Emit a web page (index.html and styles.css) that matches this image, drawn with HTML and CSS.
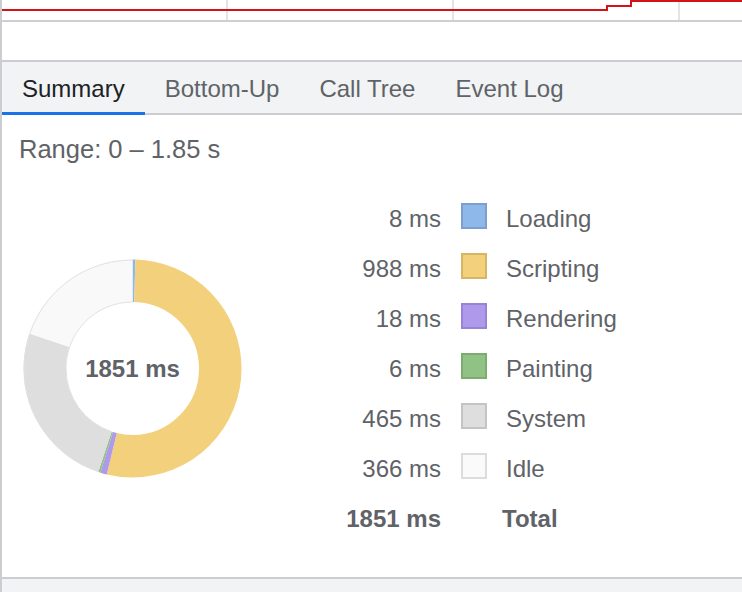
FILE: index.html
```html
<!DOCTYPE html>
<html lang="en">
<head>
<meta charset="utf-8">
<title>Performance Summary</title>
<link rel="stylesheet" href="styles.css">
</head>
<body>
<div class="panel">
  <div class="overview">
    <svg class="overview-svg" width="740" height="20" viewBox="0 0 740 20">
      <rect x="224" y="0" width="2" height="20" fill="#e4e4e4"/>
      <rect x="450" y="0" width="2" height="20" fill="#e4e4e4"/>
      <rect x="676" y="0" width="2" height="20" fill="#e4e4e4"/>
      <path d="M0 10 H605 V6 H629 V1 H740" fill="none" stroke="#d31414" stroke-width="2"/>
    </svg>
  </div>
  <div class="gap"></div>
  <div class="tabs">
    <div class="tab active">Summary</div>
    <div class="tab">Bottom-Up</div>
    <div class="tab">Call Tree</div>
    <div class="tab">Event Log</div>
  </div>
  <div class="summary">
    <div class="range">Range: 0 – 1.85 s</div>
    <div class="details">
      <div class="donut">
        <svg class="donut-svg" width="219" height="219" viewBox="0 0 219 219">
          <g transform="rotate(-90 109.5 109.5)" fill="none" stroke-width="42.5">
            <circle cx="109.5" cy="109.5" r="87.75" pathLength="1851" stroke="#8fb8ea" stroke-dasharray="8 1843" stroke-dashoffset="0"/>
            <circle cx="109.5" cy="109.5" r="87.75" pathLength="1851" stroke="#f2d07c" stroke-dasharray="988 863" stroke-dashoffset="-8"/>
            <circle cx="109.5" cy="109.5" r="87.75" pathLength="1851" stroke="#af99eb" stroke-dasharray="18 1833" stroke-dashoffset="-996"/>
            <circle cx="109.5" cy="109.5" r="87.75" pathLength="1851" stroke="#90c185" stroke-dasharray="6 1845" stroke-dashoffset="-1014"/>
            <circle cx="109.5" cy="109.5" r="87.75" pathLength="1851" stroke="#dedede" stroke-dasharray="465 1386" stroke-dashoffset="-1020"/>
            <circle cx="109.5" cy="109.5" r="87.75" pathLength="1851" stroke="#f9f9f9" stroke-dasharray="366 1485" stroke-dashoffset="-1485"/>
            <circle cx="109.5" cy="109.5" r="108.5" pathLength="1851" stroke="#e2e2e2" stroke-width="1" stroke-dasharray="831 1020" stroke-dashoffset="-1020"/>
            <circle cx="109.5" cy="109.5" r="66.5" pathLength="1851" stroke="#e2e2e2" stroke-width="1" stroke-dasharray="831 1020" stroke-dashoffset="-1020"/>
          </g>
        </svg>
        <div class="donut-total">1851 ms</div>
      </div>
      <div class="legend">
        <div class="value">8 ms</div><div class="swatch loading"></div><div class="label">Loading</div>
        <div class="value">988 ms</div><div class="swatch scripting"></div><div class="label">Scripting</div>
        <div class="value">18 ms</div><div class="swatch rendering"></div><div class="label">Rendering</div>
        <div class="value">6 ms</div><div class="swatch painting"></div><div class="label">Painting</div>
        <div class="value">465 ms</div><div class="swatch system"></div><div class="label">System</div>
        <div class="value">366 ms</div><div class="swatch idle"></div><div class="label">Idle</div>
        <div class="value total">1851 ms</div><div class="swatch-empty"></div><div class="label total total-label">Total</div>
      </div>
    </div>
  </div>
  <div class="footer"></div>
</div>
</body>
</html>
```

FILE: styles.css
```css
html, body {
  margin: 0;
  padding: 0;
  background: #ffffff;
}

body {
  font-family: "Liberation Sans", Arial, Helvetica, sans-serif;
  color: #5f6368;
}

.panel {
  height: 592px;
  border-left: 2px solid #cbcdd1;
  display: flex;
  flex-direction: column;
  box-sizing: border-box;
}

.overview {
  height: 20px;
  border-bottom: 2px solid #cdcfd3;
  overflow: hidden;
}

.overview-svg {
  display: block;
}

.gap {
  height: 38px;
}

.tabs {
  display: flex;
  height: 51px;
  background: #f1f3f4;
  border-top: 2px solid #cbcdd1;
  border-bottom: 2px solid #cbcdd1;
}

.tab {
  position: relative;
  padding: 2px 20px 0;
  font-size: 24px;
  line-height: 49px;
  color: #5f6368;
}

.tab.active {
  color: #202124;
}

.tab.active::after {
  content: "";
  position: absolute;
  left: 0;
  right: 0;
  bottom: -2px;
  height: 3px;
  background: #1a73e8;
}

.summary {
  flex: 1;
  padding: 19px 0 0 17px;
}

.range {
  font-size: 25.5px;
  line-height: 30px;
  color: #5f6368;
}

.details {
  display: flex;
  align-items: center;
  margin-top: 29px;
}

.donut {
  display: grid;
  place-items: center;
  margin-left: 4px;
  width: 219px;
  height: 219px;
}

.donut-svg,
.donut-total {
  grid-area: 1 / 1;
}

.donut-svg {
  display: block;
}

.donut-total {
  font-size: 24px;
  font-weight: bold;
  color: #5f6368;
  padding-top: 2px;
}

.legend {
  margin-left: 99px;
  display: grid;
  grid-template-columns: 100px 26px auto;
  grid-auto-rows: 50px;
  column-gap: 20px;
  align-items: center;
  font-size: 24px;
}

.value {
  text-align: right;
  padding-top: 2px;
}

.label {
  margin-left: -1px;
  padding-top: 2px;
}

.total {
  font-weight: bold;
}

.total-label {
  margin-left: -5px;
}

.swatch {
  width: 26px;
  height: 26px;
  box-sizing: border-box;
  border: 2px solid;
  margin-top: -4px;
}

.swatch.loading { background: #8fb8ea; border-color: #7c9fd0; }
.swatch.scripting { background: #f3d17c; border-color: #d6b665; }
.swatch.rendering { background: #af99eb; border-color: #9a83d6; }
.swatch.painting { background: #90c185; border-color: #7cac70; }
.swatch.system { background: #dedede; border-color: #c4c4c4; }
.swatch.idle { background: #fafafa; border-color: #dcdcdc; }

.footer {
  height: 13px;
  border-top: 2px solid #cbcdd1;
  background: #f1f3f4;
}
```
